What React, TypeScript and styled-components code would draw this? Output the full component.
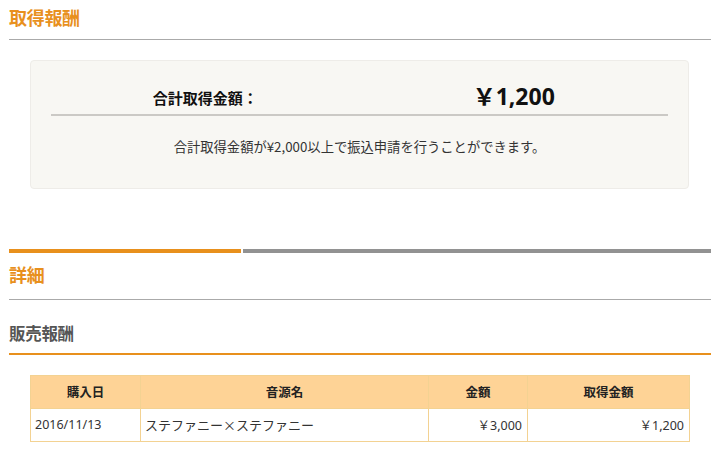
import React from "react";
import styled, { createGlobalStyle } from "styled-components";

const Global = createGlobalStyle`
  html, body { margin: 0; padding: 0; background: #fff; }
  body { font-family: "Noto Sans CJK JP", "Noto Sans", sans-serif; color: #333; }
`;

const Page = styled.div`
  width: 724px;
  padding: 0 13px 0 9px;
  box-sizing: border-box;
`;

const Heading = styled.h2<{ $tone?: "orange" | "gray" }>`
  margin: 0;
  font-size: ${(p) => (p.$tone === "gray" ? "16.5px" : "18px")};
  font-weight: 700;
  line-height: 1;
  color: ${(p) => (p.$tone === "gray" ? "#555" : "#e8901d")};
  letter-spacing: -0.3px;
`;

const HeadingBlock = styled.div<{ $top: number; $bottom: number; $line: string; $lineW: number }>`
  padding-top: ${(p) => p.$top}px;
  padding-bottom: ${(p) => p.$bottom}px;
  border-bottom: ${(p) => p.$lineW}px solid ${(p) => p.$line};
`;

const SummaryBox = styled.div`
  margin: 20px 22px 0 21px;
  height: 129px;
  box-sizing: border-box;
  background: #f8f7f3;
  border: 1px solid #eeece8;
  border-radius: 4px;
  padding: 0 20px;
`;

const TotalRow = styled.div`
  display: grid;
  grid-template-columns: 1fr 1fr;
  align-items: center;
  height: 53px;
  border-bottom: 2px solid #cbc9c5;
`;

const TotalLabel = styled.div`
  text-align: center;
  font-size: 15px;
  font-weight: 700;
  color: #111;
  padding-top: 19px;
`;

const TotalValue = styled.div`
  text-align: center;
  font-family: "Noto Sans", "Noto Sans CJK JP", sans-serif;
  font-size: 23px;
  font-weight: 700;
  color: #111;
  padding-top: 14px;
`;

const Yen = styled.span`
  font-family: "Noto Sans CJK JP", sans-serif;
`;

const Note = styled.p`
  margin: 0;
  padding-top: 21px;
  text-align: center;
  font-size: 13.3px;
  color: #333;
`;

const TabBar = styled.div`
  display: grid;
  grid-template-columns: 232px 1fr;
  gap: 2px;
  margin-top: 60px;
  height: 4px;
`;

const TabSeg = styled.div<{ $active?: boolean }>`
  background: ${(p) => (p.$active ? "#e8901d" : "#929292")};
`;

const Table = styled.table`
  margin: 20px 22px 0 21px;
  width: 659px;
  border-collapse: collapse;
  table-layout: fixed;
  font-size: 13px;
`;

const Th = styled.th<{ $w: number }>`
  width: ${(p) => p.$w}px;
  height: 33px;
  background: #fed396;
  border: 1px solid #f3d292;
  font-size: 12.5px;
  font-weight: 700;
  color: #222;
  padding: 0;
  box-sizing: border-box;
`;

const Td = styled.td<{ $align?: "left" | "right"; $latin?: boolean }>`
  height: 33px;
  border: 1px solid #f3d292;
  padding: 0 5px 0 4px;
  text-align: ${(p) => p.$align ?? "left"};
  color: #333;
  font-family: ${(p) => (p.$latin ? `"Noto Sans", "Noto Sans CJK JP", sans-serif` : `"Noto Sans CJK JP", sans-serif`)};
  font-size: ${(p) => (p.$latin ? "12.5px" : "13px")};
  box-sizing: border-box;
`;

export default function App() {
  return (
    <Page>
      <Global />
      <HeadingBlock $top={8} $bottom={13} $line="#aaaaaa" $lineW={1}>
        <Heading>取得報酬</Heading>
      </HeadingBlock>
      <SummaryBox>
        <TotalRow>
          <TotalLabel>合計取得金額：</TotalLabel>
          <TotalValue>
            <Yen>￥</Yen>1,200
          </TotalValue>
        </TotalRow>
        <Note>合計取得金額が¥2,000以上で振込申請を行うことができます。</Note>
      </SummaryBox>
      <TabBar>
        <TabSeg $active />
        <TabSeg />
      </TabBar>
      <HeadingBlock $top={12} $bottom={16} $line="#aaaaaa" $lineW={1}>
        <Heading>詳細</Heading>
      </HeadingBlock>
      <HeadingBlock $top={25} $bottom={11} $line="#e8901d" $lineW={2}>
        <Heading $tone="gray">販売報酬</Heading>
      </HeadingBlock>
      <Table>
        <thead>
          <tr>
            <Th $w={110}>購入日</Th>
            <Th $w={288}>音源名</Th>
            <Th $w={99}>金額</Th>
            <Th $w={162}>取得金額</Th>
          </tr>
        </thead>
        <tbody>
          <tr>
            <Td $latin>2016/11/13</Td>
            <Td>ステファニー×ステファニー</Td>
            <Td $align="right" $latin>
              <Yen>￥</Yen>3,000
            </Td>
            <Td $align="right" $latin>
              <Yen>￥</Yen>1,200
            </Td>
          </tr>
        </tbody>
      </Table>
    </Page>
  );
}
